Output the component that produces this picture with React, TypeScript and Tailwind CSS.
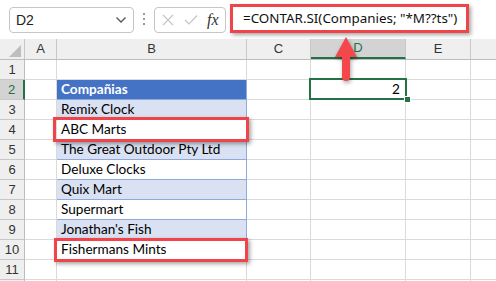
import React from 'react';

const COLS = [
    { key: 'A', w: 'w-[32px]' },
    { key: 'B', w: 'w-[190px]' },
    { key: 'C', w: 'w-[64px]' },
    { key: 'D', w: 'w-[95px]' },
    { key: 'E', w: 'w-[65px]' },
    { key: 'F', w: 'w-[64px]' },
];

const companies: Record<number, string> = {
    3: 'Remix Clock',
    4: 'ABC Marts',
    5: 'The Great Outdoor Pty Ltd',
    6: 'Deluxe Clocks',
    7: 'Quix Mart',
    8: 'Supermart',
    9: "Jonathan's Fish",
    10: 'Fishermans Mints',
};

const ROWS = Array.from({ length: 12 }, (_, i) => i + 1);

const Toolbar: React.FC = () => (
    <div className="h-[39px] bg-white flex items-start font-['Liberation_Sans',sans-serif]">
        <div className="ml-[9px] mt-[7px] w-[125px] h-[26px] border border-[#c6c6c6] rounded-[4px] bg-white flex items-center justify-between pl-[6px] pr-[6px]">
            <span className="text-[14px] text-[#222]">D2</span>
            <svg width="12" height="8" viewBox="0 0 12 8">
                <path d="M1.5 1.5 L6 6 L10.5 1.5" fill="none" stroke="#555" strokeWidth="1.3" />
            </svg>
        </div>
        <div className="ml-[9px] mt-[13px] flex flex-col gap-[3px]">
            <div className="w-[2px] h-[2px] bg-[#999]" />
            <div className="w-[2px] h-[2px] bg-[#999]" />
            <div className="w-[2px] h-[2px] bg-[#999]" />
        </div>
        <div className="ml-[9px] mt-[7px] w-[72px] h-[26px] border border-[#c6c6c6] rounded-[4px] bg-white flex items-center pl-[7px]">
            <svg width="12" height="12" viewBox="0 0 12 12">
                <path d="M1 1 L11 11 M11 1 L1 11" stroke="#c4c4c4" strokeWidth="1.1" />
            </svg>
            <svg width="14" height="12" viewBox="0 0 14 12" className="ml-[10px]">
                <path d="M1 6 L5 10 L13 1.5" fill="none" stroke="#c4c4c4" strokeWidth="1.1" />
            </svg>
            <span className="ml-[9px] text-[16px] italic text-[#333] font-['Liberation_Serif',serif] leading-none">fx</span>
        </div>
        <div className="ml-[4px] mt-[4px] w-[239px] h-[29px] border-[3px] border-[#ef4449] bg-white flex items-center pl-[10px] shadow-[2px_2px_4px_rgba(0,0,0,0.35)] relative z-10">
            <span className="text-[13.4px] text-[#111] font-['Noto_Sans',sans-serif] whitespace-nowrap">=CONTAR.SI(Companies; "*M??ts")</span>
        </div>
    </div>
);

const HeaderRow: React.FC = () => (
    <div className="flex h-[21px] bg-[#efefef] border-b border-[#bdbdbd] font-['Liberation_Sans',sans-serif]">
        <div className="w-[25px] shrink-0 border-r border-[#c8c8c8] relative">
            <svg width="12" height="12" viewBox="0 0 12 12" className="absolute right-[3px] bottom-[2px]">
                <path d="M12 0 L12 12 L0 12 Z" fill="#bdbdbd" />
            </svg>
        </div>
        {COLS.map((c) => (
            <div
                key={c.key}
                className={`${c.w} shrink-0 flex items-center justify-center text-[13px] border-r border-[#c8c8c8] ${
                    c.key === 'D' ? 'bg-[#d3d3d3] text-[#217346] border-b-2 border-b-[#217346]' : 'text-[#333]'
                }`}
            >
                {c.key === 'F' ? '' : c.key}
            </div>
        ))}
    </div>
);

const Cell: React.FC<{ row: number; col: string; w: string }> = ({ row, col, w }) => {
    if (col === 'B' && row === 2) {
        return (
            <div className={`${w} shrink-0 h-full flex items-center pl-[4px] bg-[#4472c4] text-white font-bold border-r border-b border-[#8ea9db]`}>
                Compañias
            </div>
        );
    }
    if (col === 'B' && companies[row]) {
        const band = row % 2 === 1 ? 'bg-[#d9e1f2]' : 'bg-white';
        return (
            <div className={`${w} shrink-0 h-full flex items-center pl-[4px] ${band} text-black border-r border-b border-[#8ea9db] whitespace-nowrap`}>
                {companies[row]}
            </div>
        );
    }
    if (col === 'D' && row === 2) {
        return (
            <div className={`${w} shrink-0 h-full flex items-center justify-end pr-[5px] text-black border-r border-b border-[#dadada]`}>
                2
            </div>
        );
    }
    return <div className={`${w} shrink-0 h-full border-r border-b border-[#dadada]`} />;
};

export default function App() {
    return (
        <div className="relative w-[496px] h-[281px] overflow-hidden bg-white">
            <Toolbar />
            <HeaderRow />
            <div className="font-['Lato',sans-serif] text-[13.6px]">
                {ROWS.map((r) => (
                    <div key={r} className="flex h-[20px]">
                        <div
                            className={`w-[25px] shrink-0 flex items-center justify-center text-[13px] font-['Liberation_Sans',sans-serif] border-b border-[#c8c8c8] ${
                                r === 2 ? 'bg-[#d3d3d3] text-[#217346] border-r-2 border-r-[#217346]' : 'bg-[#efefef] text-[#333] border-r border-r-[#bdbdbd]'
                            }`}
                        >
                            {r < 12 ? r : ''}
                        </div>
                        {COLS.map((c) => (
                            <Cell key={c.key} row={r} col={c.key} w={c.w} />
                        ))}
                    </div>
                ))}
            </div>

            {/* active cell D2 */}
            <div className="absolute left-[309px] top-[78px] w-[98px] h-[22px] border-2 border-[#217346] pointer-events-none" />
            <div className="absolute left-[404px] top-[96px] w-[5px] h-[5px] bg-[#217346] border border-white box-content" />

            {/* highlight boxes */}
            <div className="absolute left-[53px] top-[117px] w-[196px] h-[25px] border-[3px] border-[#ef4449] shadow-[2px_2px_4px_rgba(0,0,0,0.35)]" />
            <div className="absolute left-[54px] top-[238px] w-[194px] h-[24px] border-[3px] border-[#ef4449] shadow-[2px_2px_4px_rgba(0,0,0,0.35)]" />

            {/* arrow */}
            <svg width="26" height="48" viewBox="0 0 26 48" className="absolute left-[333px] top-[35px] drop-shadow-[1px_2px_2px_rgba(0,0,0,0.35)]">
                <path d="M13 2 L24 22 L17 22 L17 42 Q17 46 13 46 Q9 46 9 42 L9 22 L2 22 Z" fill="#f4474b" />
            </svg>
        </div>
    );
}
